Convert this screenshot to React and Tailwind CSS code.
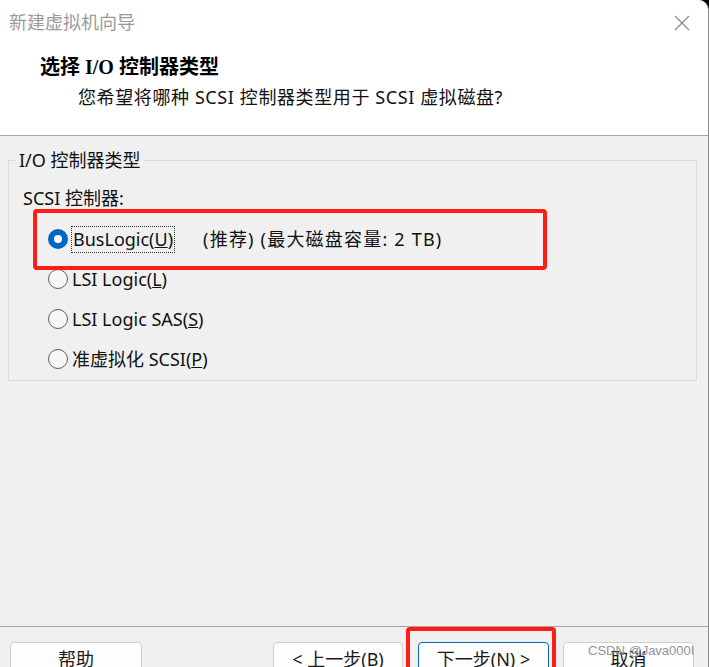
import React from "react";

const FONT = { fontFamily: '"Noto Sans", "Noto Sans CJK SC", sans-serif' };

function Radio({ checked }) {
  if (checked) {
    return (
      <span className="flex h-[20px] w-[20px] shrink-0 items-center justify-center rounded-full bg-[#0067c0]">
        <span className="h-[8px] w-[8px] rounded-full bg-white" />
      </span>
    );
  }
  return <span className="h-[20px] w-[20px] shrink-0 rounded-full border border-[#5f5f5f] bg-[#f7f7f7]" />;
}

function Row({ checked, children, extra }) {
  return (
    <div className="ml-[25px] flex h-[40px] items-center">
      <Radio checked={checked} />
      <span
        className={
          checked
            ? "ml-[3px] border border-dotted border-[#333] px-[1px] leading-[25px]"
            : "ml-[4px] leading-[25px]"
        }
      >
        {children}
      </span>
      {extra && <span className="ml-[28px] tracking-[1.2px]">{extra}</span>}
    </div>
  );
}

function Btn({ children, className = "" }) {
  return (
    <div
      className={
        "flex h-[34px] items-center justify-center rounded-[4px] border bg-[#fdfdfd] text-[18px] text-[#1a1a1a] " +
        className
      }
    >
      {children}
    </div>
  );
}

export default function App() {
  return (
    <div className="relative h-[667px] w-[709px] overflow-hidden bg-black" style={FONT}>
      <div className="flex h-full w-full flex-col rounded-tr-[10px] border-r border-[#8a8a8a] bg-[#f0f0f0] text-[#111]">
        {/* header */}
        <div className="h-[136px] shrink-0 rounded-tr-[10px] border-b border-[#a6a6a6] bg-white">
          <div className="flex h-[45px] items-center justify-between pl-[9px] pr-[18px]">
            <span className="text-[18px] text-[#9a9a9a]">新建虚拟机向导</span>
            <svg width="16" height="16" viewBox="0 0 16 16">
              <path d="M1 1 L15 15 M15 1 L1 15" stroke="#8c8c8c" strokeWidth="1.3" fill="none" />
            </svg>
          </div>
          <div
            className="ml-[40px] mt-[9px] text-[20px] font-bold leading-[26px] text-black"
            style={{ fontFamily: '"Liberation Serif", "Noto Sans CJK SC", serif' }}
          >
            选择 I/O 控制器类型
          </div>
          <div className="ml-[78px] mt-[4px] text-[18px] leading-[26px] tracking-[0.6px] text-[#111]">
            您希望将哪种 SCSI 控制器类型用于 SCSI 虚拟磁盘?
          </div>
        </div>

        {/* body */}
        <div className="h-[490px] shrink-0 pl-[8px] pr-[11px] pt-[12px]">
          <fieldset className="border border-[#dcdcdc] pb-[1px]">
            <legend className="ml-[7px] px-[3px] text-[18px] leading-[24px]">I/O 控制器类型</legend>
            <div className="pl-[14px]">
              <div className="mt-[14px] text-[18px] leading-[24px]">SCSI 控制器:</div>
              <div className="mt-[9px] text-[18px]">
                <Row checked extra="(推荐) (最大磁盘容量: 2 TB)">
                  BusLogic(<u>U</u>)
                </Row>
                <Row>
                  LSI Logic(<u>L</u>)
                </Row>
                <Row>
                  LSI Logic SAS(<u>S</u>)
                </Row>
                <Row>
                  准虚拟化 SCSI(<u>P</u>)
                </Row>
              </div>
            </div>
          </fieldset>
        </div>

        {/* footer */}
        <div className="flex shrink-0 border-t border-[#a3a3a3] pt-[15px]">
          <Btn className="ml-[10px] w-[132px] border-[#d0d0d0]">帮助</Btn>
          <Btn className="ml-[131px] w-[130px] border-[#d0d0d0]">
            &lt; 上一步(<u>B</u>)
          </Btn>
          <Btn className="ml-[15px] w-[131px] border-[#0067c0]">
            下一步(<u>N</u>) &gt;
          </Btn>
          <Btn className="ml-[14px] w-[131px] border-[#d0d0d0]">取消</Btn>
        </div>
      </div>

      {/* annotations */}
      <div className="absolute left-[33px] top-[209px] h-[61px] w-[514px] rounded-[4px] border-[4px] border-[#fe1d14]" />
      <div className="absolute left-[406px] top-[627px] h-[50px] w-[150px] rounded-[4px] border-[4px] border-[#fe1d14]" />
      <div
        className="absolute left-[588px] top-[642px] whitespace-nowrap text-[13px] leading-[18px] text-[#8a8a8a] opacity-90"
        style={{ fontFamily: '"Liberation Sans", sans-serif' }}
      >
        CSDN @Java000I
      </div>
    </div>
  );
}
